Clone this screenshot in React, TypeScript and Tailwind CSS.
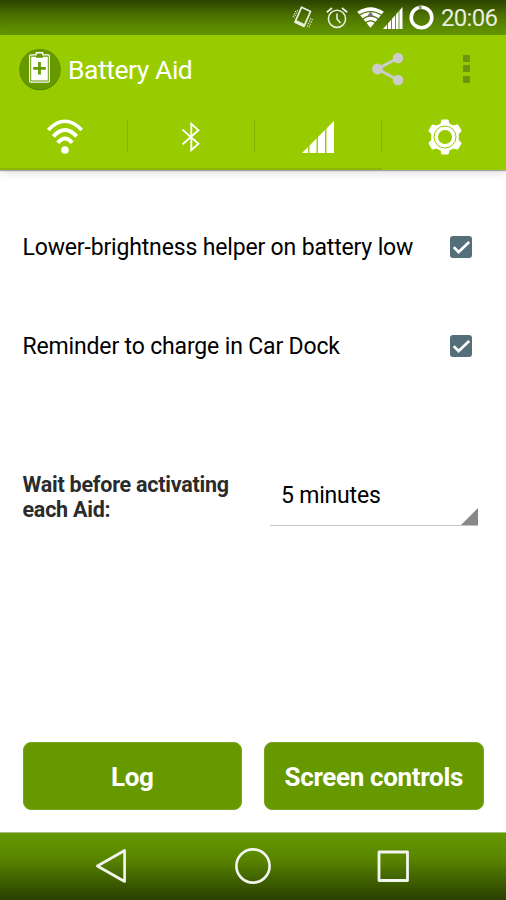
import { useState } from "react"

const VibrateIcon = () => (
  <svg className="w-[22px] h-[24px]" viewBox="0 0 22 24" fill="none" stroke="#e8eee0" strokeWidth="1.7" strokeLinejoin="round">
    <path d="M9.6 1.2 L18.6 5.4 L12 20.4 L3 16.2 Z" />
    <path d="M3.6 15.2 L12.4 19.4" strokeWidth="2.4" />
    <path d="M5.8 4 L2.2 11.8 M3.8 4.8 L0.8 11.4 M18.9 12 L14.8 21.6 M20.6 13 L16.8 21.8" strokeWidth="1" strokeDasharray="1.6 1" />
  </svg>
)

const AlarmIcon = () => (
  <svg className="w-[22px] h-[22px]" viewBox="0 0 22 22" fill="none" stroke="#e8eee0" strokeWidth="1.6">
    <circle cx="11" cy="11.8" r="8.6" />
    <path d="M11 6.5 V12 L14.5 16" />
    <path d="M0.8 5.2 L6 1 M21.2 5.2 L16 1" strokeWidth="1.8" />
  </svg>
)

const StatusWifiIcon = () => (
  <svg className="w-[27px] h-[21px]" viewBox="0 0 27 21" fill="none">
    <path d="M0.2 4.8 Q13.5 -4.2 26.8 4.8 L13.5 20.8 Z" fill="#fff" />
    <path d="M2 8.2 Q13.5 0.8 25 8.2 M5 12.2 Q13.5 6.2 22 12.2 M8.2 16 Q13.5 11.8 18.8 16" stroke="#4c7600" strokeWidth="1.2" />
    <path d="M13.5 4.5 L17 9.5 H10 Z" fill="#777" />
  </svg>
)

const StatusSignalIcon = () => (
  <svg className="w-[20px] h-[22px]" viewBox="0 0 20 22">
    <path d="M0 22 L19.5 0 V22 Z" fill="#fff" />
    <path d="M4.5 10 V22 M8.5 8 V22 M12.5 4 V22 M16 2 V22" stroke="#4c7600" strokeWidth="0.8" />
  </svg>
)

const BatteryRing = () => (
  <svg className="w-[25px] h-[25px]" viewBox="0 0 25 25" fill="none">
    <circle cx="12.5" cy="12.5" r="10.3" stroke="#fff" strokeWidth="3.6" />
    <path d="M9.8 2.5 Q11 2.2 12.5 2.2" stroke="#8a967d" strokeWidth="3.6" />
  </svg>
)

const AppLogo = () => (
  <svg className="w-[42px] h-[43px]" viewBox="0 0 42 43">
    <circle cx="21" cy="21.6" r="20.7" fill="#568300" />
    <circle cx="21" cy="21" r="20.3" fill="#669900" />
    <path d="M16.5 6.3 V5.1 Q16.5 4.1 17.5 4.1 H23.5 Q24.5 4.1 24.5 5.1 V6.3 H29 Q31 6.3 31 8.3 V32.7 Q31 34.7 29 34.7 H12 Q10 34.7 10 32.7 V8.3 Q10 6.3 12 6.3 Z" fill="#fff" />
    <path d="M17.8 5.4 H23.2 V7.6 H29 Q29.8 7.6 29.8 8.4 V32.7 Q29.8 33.5 29 33.5 H12 Q11.2 33.5 11.2 32.7 V8.4 Q11.2 7.6 12 7.6 H17.8 Z" fill="#669900" />
    <path d="M12.2 8.8 H17 V9.8 H24 V8.8 H28.8 V32.4 H12.2 Z" fill="#fff" />
    <path d="M20.5 14 V26.6 M14.2 20.3 H26.8" stroke="#669900" strokeWidth="2.8" />
  </svg>
)

const ShareIcon = () => (
  <svg className="w-[32px] h-[34px]" viewBox="0 0 32 34" fill="#cccccc" stroke="#cccccc">
    <path d="M26 6 L5.5 17 L26 28" fill="none" strokeWidth="3" />
    <circle cx="26" cy="6" r="5.2" stroke="none" />
    <circle cx="5.5" cy="17" r="5.4" stroke="none" />
    <circle cx="26" cy="28" r="5.2" stroke="none" />
  </svg>
)

const WifiIcon = () => (
  <svg className="w-[36px] h-[36px]" viewBox="0 0 36 36" fill="none" stroke="#fff">
    <path d="M1.3 11 Q18 -6.4 34.7 11" strokeWidth="3.6" />
    <path d="M6.4 17.4 Q18 4.8 29.6 17.4" strokeWidth="4" />
    <path d="M10.8 23.8 Q18 15 25.2 23.8" strokeWidth="4" />
    <circle cx="18" cy="31" r="3.8" fill="#fff" stroke="none" />
  </svg>
)

const BluetoothIcon = () => (
  <svg className="mr-[2px] w-[20px] h-[32px]" viewBox="0 0 20 32" fill="none" stroke="#fff" strokeWidth="1.9">
    <path d="M1.5 8.6 L17.4 22.8 L10.3 29.2 V2.8 L17.4 9.2 L1.5 23.4" />
  </svg>
)

const SignalIcon = () => (
  <svg className="mr-[3px] w-[32px] h-[32px]" viewBox="0 0 32 32">
    <path d="M0 32 L32 0 V32 Z" fill="#fff" />
    <path d="M6.8 20 V32 M15.2 12 V32 M23.7 4 V32" stroke="#99cc00" strokeWidth="1.4" />
  </svg>
)

const GearIcon = () => (
  <svg className="w-[36px] h-[36px]" viewBox="0 0 36 36">
    <path
      d="M15.2 1.2 H20.8 L21.8 5.2 Q24.2 5.8 26.2 7.4 L30.6 6.4 L33.8 11.8 L30.8 15 Q31.4 18 30.8 21 L33.8 24.2 L30.6 29.6 L26.2 28.6 Q24.2 30.2 21.8 30.8 L20.8 34.8 H15.2 L14.2 30.8 Q11.8 30.2 9.8 28.6 L5.4 29.6 L2.2 24.2 L5.2 21 Q4.6 18 5.2 15 L2.2 11.8 L5.4 6.4 L9.8 7.4 Q11.8 5.8 14.2 5.2 Z"
      fill="#fff"
      stroke="#fff"
      strokeWidth="1.6"
      strokeLinejoin="round"
    />
    <circle cx="18" cy="18" r="11" fill="none" stroke="#99cc00" strokeWidth="1" />
    <circle cx="18" cy="18" r="7" fill="#99cc00" />
  </svg>
)

const tabs = [
  { id: "wifi", label: "Wi-Fi", icon: WifiIcon },
  { id: "bluetooth", label: "Bluetooth", icon: BluetoothIcon },
  { id: "signal", label: "Mobile data", icon: SignalIcon },
  { id: "settings", label: "Settings", icon: GearIcon },
]

const Checkbox = ({ checked, label, onChange }: { checked: boolean; label: string; onChange: () => void }) => (
  <button
    role="checkbox"
    aria-checked={checked}
    aria-label={label}
    onClick={onChange}
    className="w-[22.5px] h-[22.5px] rounded-[3px] bg-[#546e7a]"
  >
    {checked && (
      <svg className="w-full h-full" viewBox="0 0 23 23" fill="none" stroke="#fff" strokeWidth="2.7">
        <path d="M3.8 11.3 L8.8 16.4 L19.6 6.1" />
      </svg>
    )}
  </button>
)

const StatusBar = () => (
  <div className="flex h-[35px] shrink-0 items-center bg-gradient-to-b from-[#2c4200] via-[#4c7200] via-45% to-[#669900] pl-[292px]">
    <VibrateIcon />
    <div className="ml-3"><AlarmIcon /></div>
    <div className="ml-[9px]"><StatusWifiIcon /></div>
    <div className="-ml-[1.5px]"><StatusSignalIcon /></div>
    <div className="ml-[6.5px]"><BatteryRing /></div>
    <span className="ml-[7px] mt-px text-[24px] leading-none text-[#e8eee0] whitespace-nowrap tracking-[-0.7px]">20:06</span>
  </div>
)

const App = () => {
  const [active, setActive] = useState("settings")
  const [brightness, setBrightness] = useState(true)
  const [carDock, setCarDock] = useState(true)

  return (
    <div className="flex h-[900px] w-[506px] flex-col overflow-hidden bg-white font-['Roboto',sans-serif]">
      <StatusBar />

      <header className="shrink-0 bg-[#99cc00] shadow-[0_1px_1px_rgba(0,0,0,0.3),0_3px_9px_rgba(0,0,0,0.13)]">
        <div className="flex h-[69px] items-center pl-[18.5px] pr-[36px]">
          <AppLogo />
          <h1 className="ml-[7.5px] mt-0.5 text-[26.5px] leading-none tracking-[-0.45px] text-white">Battery Aid</h1>
          <button aria-label="Share" className="ml-auto mr-[59.5px] -mt-0.5">
            <ShareIcon />
          </button>
          <button aria-label="More" className="-mt-0.5 flex flex-col gap-[3.5px]">
            <span className="h-[7px] w-[7px] bg-[#6f9410]" />
            <span className="h-[7px] w-[7px] bg-[#6f9410]" />
            <span className="h-[7px] w-[7px] bg-[#6f9410]" />
          </button>
        </div>

        <nav className="grid h-[66px] grid-cols-[128px_127px_127px_124px]">
          {tabs.map(({ id, label, icon: Icon }, index) => (
            <button
              key={id}
              aria-label={label}
              onClick={() => setActive(id)}
              className={`flex items-center border-b-2 ${active === id ? "border-[#99cc00]" : "border-[#8ab800]"}`}
            >
              <span className="flex flex-1 justify-center pl-0.5 pt-px">
                <Icon />
              </span>
              {index < tabs.length - 1 && <span className="h-[34px] w-px bg-[#86b300]" />}
            </button>
          ))}
        </nav>
      </header>

      <main className="flex flex-1 flex-col px-[22.5px] text-black">
        <div className="mt-[58px] flex h-[38px] items-center justify-between pr-[11.5px]">
          <span className="mt-[3px] text-[23px] tracking-[-0.16px] whitespace-nowrap">Lower-brightness helper on battery low</span>
          <Checkbox label="Lower-brightness helper" checked={brightness} onChange={() => setBrightness(!brightness)} />
        </div>

        <div className="mt-[61px] flex h-[38px] items-center justify-between pr-[11.5px]">
          <span className="mt-[3px] text-[23px] tracking-[-0.16px] whitespace-nowrap">Reminder to charge in Car Dock</span>
          <Checkbox label="Car Dock reminder" checked={carDock} onChange={() => setCarDock(!carDock)} />
        </div>

        <div className="mt-[107px] flex items-start">
          <p className="w-[247px] text-[21.5px] leading-[25px] font-bold tracking-[-0.24px] text-[#2b2b2b]">
            Wait before activating
            <br />
            each Aid:
          </p>
          <button className="flex h-[54px] w-[208px] items-end justify-between border-b border-[#c4c4c4]">
            <span className="self-start pl-[11.5px] pt-[7px] text-[23px] leading-[34px] tracking-[-0.2px]">5 minutes</span>
            <svg className="h-[17px] w-[17px]" viewBox="0 0 17 17">
              <path d="M17 0 V17 H0 Z" fill="#888" />
            </svg>
          </button>
        </div>

        <div className="mt-auto mb-[22px] flex gap-[22px]">
          <button className="h-[68px] flex-1 rounded-lg border border-[#78a51c] bg-[#669900] pt-[3px] text-[26px] font-bold tracking-[-0.35px] text-white">Log</button>
          <button className="h-[68px] flex-1 rounded-lg border border-[#78a51c] bg-[#669900] pt-[3px] text-[26px] font-bold tracking-[-0.35px] text-white">Screen controls</button>
        </div>
      </main>

      <footer className="flex h-[68px] shrink-0 items-center border-t border-[#a9bf80] bg-gradient-to-b from-[#669900] via-[#588400] via-40% to-[#2a4000] pb-0.5 pl-[95px]">
        <svg className="h-[36px] w-[32px]" viewBox="0 0 32 36" fill="none" stroke="#f2f4ee" strokeWidth="2.7" strokeLinejoin="round">
          <path d="M29.6 2.5 V33.5 L2.4 18 Z" />
        </svg>
        <svg className="ml-[107px] h-[38px] w-[38px]" viewBox="0 0 38 38" fill="none" stroke="#f2f4ee" strokeWidth="2.6">
          <circle cx="19" cy="19" r="16.6" />
        </svg>
        <svg className="ml-[105px] h-[32px] w-[32px]" viewBox="0 0 32 32" fill="none" stroke="#f2f4ee" strokeWidth="2.8" strokeLinejoin="round">
          <path d="M2 2 H30.5 V30.5 H2 Z" />
        </svg>
      </footer>
    </div>
  )
}

export default App
